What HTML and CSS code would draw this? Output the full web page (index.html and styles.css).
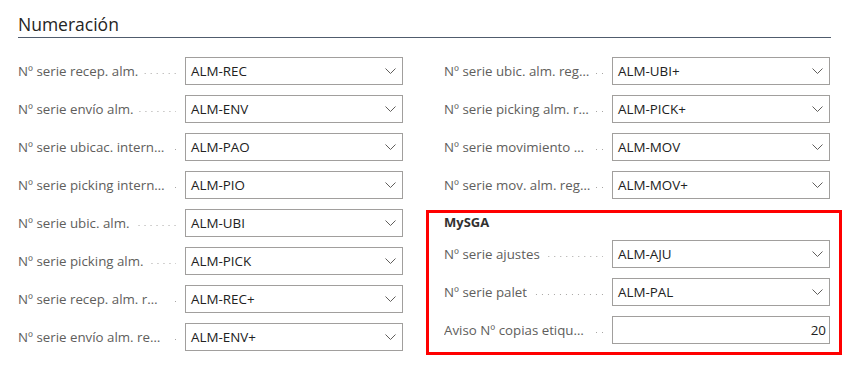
FILE: index.html
```html
<!DOCTYPE html>
<html lang="es">
<head>
<meta charset="utf-8">
<title>Numeración</title>
<link rel="stylesheet" href="styles.css">
</head>
<body>
<div class="page">
  <h2 class="title">Numeración</h2>
  <div class="cols">
    <div class="col">
      <div class="field"><div class="label"><span class="label-text">Nº serie recep. alm.</span><span class="leader"></span></div><div class="input"><span class="value">ALM-REC</span><svg class="chev" width="11" height="6" viewBox="0 0 11 6"><path d="M0.5 0.5 L5.5 5.5 L10.5 0.5"/></svg></div></div>
      <div class="field"><div class="label"><span class="label-text">Nº serie envío alm.</span><span class="leader"></span></div><div class="input"><span class="value">ALM-ENV</span><svg class="chev" width="11" height="6" viewBox="0 0 11 6"><path d="M0.5 0.5 L5.5 5.5 L10.5 0.5"/></svg></div></div>
      <div class="field"><div class="label"><span class="label-text">Nº serie ubicac. internas</span><span class="leader"></span></div><div class="input"><span class="value">ALM-PAO</span><svg class="chev" width="11" height="6" viewBox="0 0 11 6"><path d="M0.5 0.5 L5.5 5.5 L10.5 0.5"/></svg></div></div>
      <div class="field"><div class="label"><span class="label-text">Nº serie picking internos</span><span class="leader"></span></div><div class="input"><span class="value">ALM-PIO</span><svg class="chev" width="11" height="6" viewBox="0 0 11 6"><path d="M0.5 0.5 L5.5 5.5 L10.5 0.5"/></svg></div></div>
      <div class="field"><div class="label"><span class="label-text">Nº serie ubic. alm.</span><span class="leader"></span></div><div class="input"><span class="value">ALM-UBI</span><svg class="chev" width="11" height="6" viewBox="0 0 11 6"><path d="M0.5 0.5 L5.5 5.5 L10.5 0.5"/></svg></div></div>
      <div class="field"><div class="label"><span class="label-text">Nº serie picking alm.</span><span class="leader"></span></div><div class="input"><span class="value">ALM-PICK</span><svg class="chev" width="11" height="6" viewBox="0 0 11 6"><path d="M0.5 0.5 L5.5 5.5 L10.5 0.5"/></svg></div></div>
      <div class="field"><div class="label"><span class="label-text">Nº serie recep. alm. registradas</span><span class="leader"></span></div><div class="input"><span class="value">ALM-REC+</span><svg class="chev" width="11" height="6" viewBox="0 0 11 6"><path d="M0.5 0.5 L5.5 5.5 L10.5 0.5"/></svg></div></div>
      <div class="field"><div class="label"><span class="label-text">Nº serie envío alm. registrados</span><span class="leader"></span></div><div class="input"><span class="value">ALM-ENV+</span><svg class="chev" width="11" height="6" viewBox="0 0 11 6"><path d="M0.5 0.5 L5.5 5.5 L10.5 0.5"/></svg></div></div>
    </div>
    <div class="col col-right">
      <div class="field"><div class="label"><span class="label-text">Nº serie ubic. alm. registradas</span><span class="leader"></span></div><div class="input"><span class="value">ALM-UBI+</span><svg class="chev" width="11" height="6" viewBox="0 0 11 6"><path d="M0.5 0.5 L5.5 5.5 L10.5 0.5"/></svg></div></div>
      <div class="field"><div class="label"><span class="label-text">Nº serie picking alm. registrados</span><span class="leader"></span></div><div class="input"><span class="value">ALM-PICK+</span><svg class="chev" width="11" height="6" viewBox="0 0 11 6"><path d="M0.5 0.5 L5.5 5.5 L10.5 0.5"/></svg></div></div>
      <div class="field"><div class="label"><span class="label-text">Nº serie movimiento almacén</span><span class="leader"></span></div><div class="input"><span class="value">ALM-MOV</span><svg class="chev" width="11" height="6" viewBox="0 0 11 6"><path d="M0.5 0.5 L5.5 5.5 L10.5 0.5"/></svg></div></div>
      <div class="field"><div class="label"><span class="label-text">Nº serie mov. alm. registrados</span><span class="leader"></span></div><div class="input"><span class="value">ALM-MOV+</span><svg class="chev" width="11" height="6" viewBox="0 0 11 6"><path d="M0.5 0.5 L5.5 5.5 L10.5 0.5"/></svg></div></div>
      <div class="group">
        <div class="group-title">MySGA</div>
        <div class="field"><div class="label"><span class="label-text">Nº serie ajustes</span><span class="leader"></span></div><div class="input"><span class="value">ALM-AJU</span><svg class="chev" width="11" height="6" viewBox="0 0 11 6"><path d="M0.5 0.5 L5.5 5.5 L10.5 0.5"/></svg></div></div>
        <div class="field"><div class="label"><span class="label-text">Nº serie palet</span><span class="leader"></span></div><div class="input"><span class="value">ALM-PAL</span><svg class="chev" width="11" height="6" viewBox="0 0 11 6"><path d="M0.5 0.5 L5.5 5.5 L10.5 0.5"/></svg></div></div>
        <div class="field"><div class="label"><span class="label-text">Aviso Nº copias etiquetas</span><span class="leader"></span></div><div class="input input-num"><span class="value">20</span></div></div>
      </div>
    </div>
  </div>
</div>
</body>
</html>
```

FILE: styles.css
```css
html, body {
  margin: 0;
  padding: 0;
  background: #ffffff;
}

body {
  font-family: "Open Sans", "Noto Sans", sans-serif;
  color: #212121;
}

.page {
  padding: 0 32px 22px 18px;
  min-height: 374px;
  box-sizing: border-box;
}

.title {
  margin: 0;
  padding-top: 13px;
  padding-bottom: 2px;
  font-size: 17.5px;
  line-height: 22px;
  font-weight: 400;
  color: #252423;
  border-bottom: 1px solid #505c6d;
}

.cols {
  display: grid;
  grid-template-columns: 385px 386px;
  column-gap: 41px;
  margin-top: 19px;
}

.col {
  display: flex;
  flex-direction: column;
  gap: 10px;
}

.field {
  display: flex;
  align-items: center;
  height: 28px;
}

.label {
  width: 167px;
  flex: none;
  display: flex;
  align-items: center;
  height: 28px;
}

.col-right .label {
  width: 168px;
}

.label-text {
  flex: none;
  max-width: 147px;
  white-space: nowrap;
  overflow: hidden;
  text-overflow: ellipsis;
  font-size: 13.3px;
  color: #605e5c;
}

.leader {
  flex: 1;
  min-width: 6px;
  height: 1px;
  margin: 5px 9px 0 5px;
  background-image: linear-gradient(to left, #a8a6a4 1px, transparent 1px);
  background-size: 6px 1px;
  background-repeat: repeat-x;
  background-position: right center;
}

.input {
  flex: 1;
  box-sizing: border-box;
  height: 28px;
  border: 1px solid #a19f9d;
  display: flex;
  align-items: center;
  justify-content: space-between;
  padding: 0 6px 0 5px;
  font-size: 13.4px;
  color: #212121;
}

.input-num {
  justify-content: flex-end;
  padding-right: 3px;
}

.chev {
  flex: none;
  fill: none;
  stroke: #605e5c;
  stroke-width: 1;
}

.group {
  position: relative;
  display: flex;
  flex-direction: column;
  gap: 10px;
}

.group::after {
  content: "";
  position: absolute;
  top: 1px;
  left: -18px;
  right: -12px;
  bottom: -11px;
  border: 3px solid #ff0000;
  pointer-events: none;
}

.group-title {
  height: 21px;
  padding-top: 5px;
  box-sizing: border-box;
  font-size: 13px;
  line-height: 16px;
  font-weight: 700;
  color: #323130;
}
```
